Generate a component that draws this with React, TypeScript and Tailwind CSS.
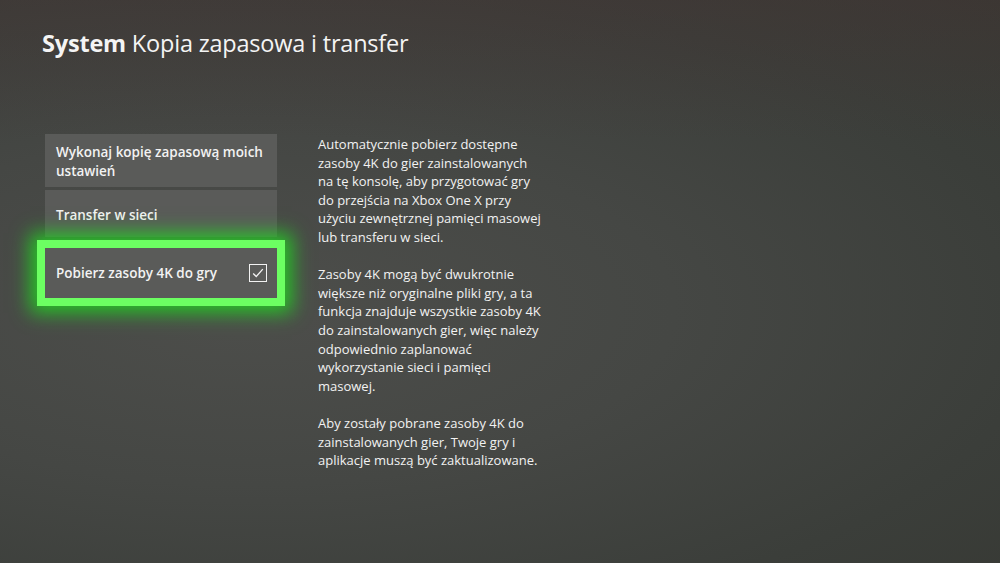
const font = { fontFamily: '"Open Sans", "Noto Sans", sans-serif' };

const Tile = ({ children, className = "" }: { children: React.ReactNode; className?: string }) => (
  <div className={`bg-[#5a5b59] px-[11px] flex items-center text-[13.5px] font-semibold leading-[19px] text-[#f2f2f2] ${className}`}>
    {children}
  </div>
);

const paragraphs = [
  [
    "Automatycznie pobierz dostępne",
    "zasoby 4K do gier zainstalowanych",
    "na tę konsolę, aby przygotować gry",
    "do przejścia na Xbox One X przy",
    "użyciu zewnętrznej pamięci masowej",
    "lub transferu w sieci.",
  ],
  [
    "Zasoby 4K mogą być dwukrotnie",
    "większe niż oryginalne pliki gry, a ta",
    "funkcja znajduje wszystkie zasoby 4K",
    "do zainstalowanych gier, więc należy",
    "odpowiednio zaplanować",
    "wykorzystanie sieci i pamięci",
    "masowej.",
  ],
  [
    "Aby zostały pobrane zasoby 4K do",
    "zainstalowanych gier, Twoje gry i",
    "aplikacje muszą być zaktualizowane.",
  ],
];

export default function App() {
  return (
    <div
      className="relative w-[1000px] h-[563px] overflow-hidden bg-[#3f413e] bg-[radial-gradient(ellipse_at_25%_55%,#4d4e4b_0%,#454744_40%,#3b3e3a_75%,#373934_100%)] text-white"
      style={font}
    >
      <div className="absolute inset-0 bg-[linear-gradient(180deg,rgba(70,50,50,0.35)_0%,rgba(0,0,0,0)_25%)] pointer-events-none" />
      <div className="relative pl-[42px] pt-[27px]">
        <h1 className="text-[23.5px] leading-[32px] text-[#f4f4f4] tracking-[-0.2px]">
          <span className="font-bold">System</span> Kopia zapasowa i transfer
        </h1>

        <div className="flex mt-[75px]">
          <div className="w-[232px] ml-[3px] flex flex-col gap-[3px]">
            <Tile className="h-[53px] pt-[2px]">
              <span>Wykonaj kopię zapasową moich ustawień</span>
            </Tile>
            <Tile className="h-[47px] items-end pb-[12px]">
              <span>Transfer w sieci</span>
            </Tile>
            <div className="-mx-[8px] border-[8px] border-[#6cff62] shadow-[0_0_18px_7px_rgba(30,225,30,0.8),inset_0_0_8px_3px_rgba(30,215,30,0.65)]">
              <Tile className="h-[50px] justify-between pr-[10px]">
                <span>Pobierz zasoby 4K do gry</span>
                <span className="w-[18px] h-[18px] border-[1.5px] border-[#f2f2f2] flex items-center justify-center">
                  <svg viewBox="0 0 16 16" className="w-[14px] h-[14px]" fill="none" stroke="#f2f2f2" strokeWidth={1.5}>
                    <path d="M2.5 8.5 L6 12 L13.5 3.5" />
                  </svg>
                </span>
              </Tile>
            </div>
          </div>

          <div className="ml-[41px] mt-[1px] text-[13px] font-medium leading-[18.6px] text-[#f2f2f2] flex flex-col gap-[18.6px] whitespace-nowrap">
            {paragraphs.map((lines, i) => (
              <p key={i}>
                {lines.map((l, j) => (
                  <span key={j} className="block">
                    {l}
                  </span>
                ))}
              </p>
            ))}
          </div>
        </div>
      </div>
    </div>
  );
}
